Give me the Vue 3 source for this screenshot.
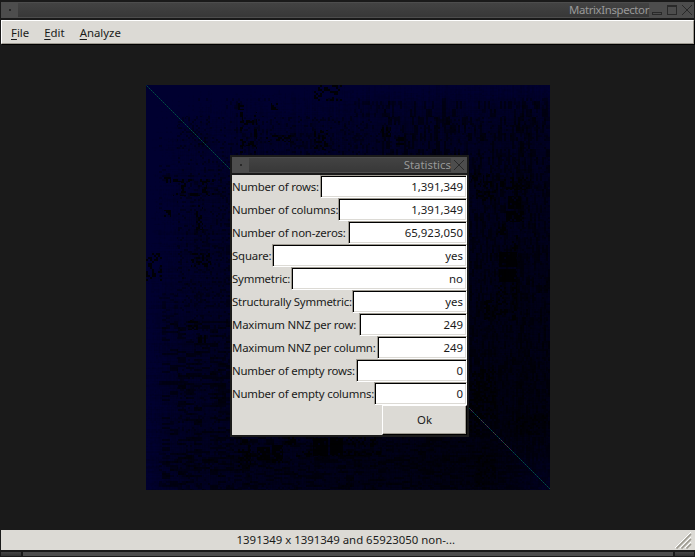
<script setup>
import { onMounted, ref } from 'vue'

const menus = ['File', 'Edit', 'Analyze']

const stats = [
  { label: 'Number of rows:', value: '1,391,349', labelWidth: 88 },
  { label: 'Number of columns:', value: '1,391,349', labelWidth: 106 },
  { label: 'Number of non-zeros:', value: '65,923,050', labelWidth: 116 },
  { label: 'Square:', value: 'yes', labelWidth: 40 },
  { label: 'Symmetric:', value: 'no', labelWidth: 59 },
  { label: 'Structurally Symmetric:', value: 'yes', labelWidth: 120 },
  { label: 'Maximum NNZ per row:', value: '249', labelWidth: 127 },
  { label: 'Maximum NNZ per column:', value: '249', labelWidth: 145 },
  { label: 'Number of empty rows:', value: '0', labelWidth: 124 },
  { label: 'Number of empty columns:', value: '0', labelWidth: 142 }
]

const matrix = ref(null)

// Deterministic hash in [0, 1)
function hash(a, b) {
  let h = Math.imul(a + 101, 0x9e3779b1)
  h = Math.imul(h ^ (h >>> 15), 0x85ebca6b)
  h = (h ^ (h >>> 13)) + Math.imul(b + 57, 0xc2b2ae35)
  h = Math.imul(h ^ (h >>> 16), 0x7feb352d)
  h = Math.imul(h ^ (h >>> 15), 0x846ca68b)
  return ((h ^ (h >>> 16)) >>> 0) / 4294967296
}

// Sparse blocks as [start, end, start, end, density lost]; mirrored over the diagonal
const blocks = [
  [167, 182, 353, 371, 0.95], [184, 197, 353, 371, 0.9],
  [111, 124, 362, 375, 0.85], [126, 137, 360, 378, 0.8],
  [94, 97, 27, 68, 0.5], [108, 111, 27, 68, 0.5], [97, 108, 35, 40, 0.6], [97, 108, 56, 61, 0.6],
  [90, 98, 18, 25, 0.5], [125, 132, 18, 25, 0.6], [168, 197, 0, 16, 0.3],
  [168, 182, 45, 65, 0.45], [120, 145, 50, 57, 0.3],
  [235, 245, 42, 52, 0.5], [250, 262, 52, 60, 0.45],
  [88, 102, 325, 335, 0.4],
  [89, 106, 337, 346, 0.45], [105, 116, 330, 350, 0.4],
  [92, 105, 350, 385, 0.4], [139, 150, 350, 360, 0.5],
  [150, 166, 366, 372, 0.55], [198, 235, 366, 371, 0.5],
  [215, 235, 338, 350, 0.4], [284, 334, 284, 350, 0.4],
  [350, 362, 200, 230, 0.4], [370, 400, 330, 350, 0.3]
]

function intensity(x, y) {
  const a = Math.min(x, y)
  const b = Math.max(x, y)
  const edge = Math.exp(-a / 22)
  let v = 57 - b * 0.035 - a * 0.055 + edge * 12
  // streaks running along both axes
  v -= hash(b >> 1, 7) * 6
  v -= hash(b, a >> 4) * 5
  v -= hash(a, b >> 4) * 5
  v -= hash(a >> 1, b >> 1) * 6
  const patch = hash(a >> 4, b >> 4)
  if (patch > 0.6 && a > 12 && hash(b >> 1, a >> 2) > 0.75) v *= 0.65
  if (b > 38 && a > 30 && hash(b >> 1, a >> 1) > 0.87) v *= 0.6
  if (b > 235 && a > 15 && hash(b >> 1, a >> 3) > 0.74) v *= 0.5
  for (const [x0, x1, y0, y1, loss] of blocks) {
    if ((x >= x0 && x < x1 && y >= y0 && y < y1) || (y >= x0 && y < x1 && x >= y0 && x < y1)) {
      if (hash(a >> 1, b >> 1) < loss) v *= 0.12
    }
  }
  const rim = Math.max(0, a - 320) / 84
  v += rim * rim * 22
  return Math.max(0, Math.min(48, v))
}

onMounted(() => {
  const el = matrix.value
  const ctx = el.getContext('2d')
  const img = ctx.createImageData(el.width, el.height)
  for (let y = 0; y < el.height; y++) {
    for (let x = 0; x < el.width; x++) {
      const i = (y * el.width + x) * 4
      img.data[i + 2] = intensity(x, y)
      img.data[i + 3] = 255
      if (x === y) {
        img.data[i + 1] = x % 2 ? 76 : 34
        img.data[i + 2] = 64
        if (x > 310 && x < 365 && hash(x, 3) > 0.6) img.data[i] = 55
      }
    }
  }
  ctx.putImageData(img, 0, 0)
})
</script>

<template>
  <div class="window">
    <header class="titlebar main-title">
      <span class="sysmenu"><i></i></span>
      <span class="caption">MatrixInspector</span>
      <svg class="controls" width="45" height="16" viewBox="0 0 45 16" fill="none" stroke="#292929" shape-rendering="crispEdges">
        <rect x="3.5" y="10.5" width="9" height="2" />
        <path d="M18.5 3.5h9v9h-9zM18 4.5h10" />
        <path d="M33 3l10 10M43 3L33 13" shape-rendering="auto" />
      </svg>
    </header>

    <nav class="menubar">
      <span v-for="m in menus" :key="m" class="menu"><u>{{ m[0] }}</u>{{ m.slice(1) }}</span>
    </nav>

    <main class="view">
      <canvas ref="matrix" class="matrix" width="404" height="405"></canvas>
    </main>

    <footer class="status">
      <span>1391349 x 1391349 and 65923050 non-...</span>
      <svg class="grip" width="17" height="18" viewBox="0 0 17 18" fill="none">
        <path d="M0 17L16 1M5 17L16 6M10 17L16 11" stroke="#fff" />
        <path d="M1.5 17.5L16 3M6.5 17.5L16 8M11.5 17.5L16 13" stroke="#9c998f" stroke-width="1.6" />
      </svg>
    </footer>
    <div class="handles"><i class="corner"></i><i class="bar"></i><i class="corner"></i></div>

    <section class="dialog">
      <header class="titlebar">
        <span class="sysmenu"><i></i></span>
        <span class="caption">Statistics</span>
        <svg class="controls" width="16" height="16" viewBox="0 0 16 16" fill="none" stroke="#292929">
          <path d="M3 3l10 10M13 3L3 13" />
        </svg>
      </header>
      <div class="body">
        <div v-for="s in stats" :key="s.label" class="row">
          <span class="label" :style="{ width: s.labelWidth + 'px' }">{{ s.label }}</span>
          <span class="entry">{{ s.value }}</span>
        </div>
        <div class="actions"><button class="ok">Ok</button></div>
      </div>
    </section>
  </div>
</template>

<style>
body {
  background: #1a1a1a;
  overflow: hidden;
}
</style>

<style scoped>
.window {
  position: relative;
  box-sizing: border-box;
  width: 695px;
  height: 557px;
  padding: 2px 0 0 1px;
  display: flex;
  flex-direction: column;
  background: #1a1a1a;
  font: 11.4px/16px "Noto Sans", sans-serif;
  color: #1a1a1a;
  overflow: hidden;
}
.titlebar {
  display: flex;
  height: 16px;
  flex: none;
  background: #4d4d4d;
  color: #999;
}
.main-title {
  margin-right: 1px;
  letter-spacing: -0.36px;
}
.sysmenu {
  width: 17px;
  display: flex;
  align-items: center;
  justify-content: center;
}
.sysmenu i {
  width: 2px;
  height: 2px;
  background: #292929;
}
.caption {
  flex: 1;
  margin: 1px 0;
  line-height: 14px;
  text-align: right;
  background: linear-gradient(#434343, #383838);
}
.controls {
  flex: none;
}
.menubar {
  display: flex;
  flex: none;
  box-sizing: border-box;
  height: 24px;
  margin: 2px 1px 0 0;
  padding: 4px 0 0 9px;
  gap: 15px;
  background: #dcdad5;
  border: 1px solid #fff;
  border-right-color: #9e9a91;
  border-bottom-color: #9e9a91;
  box-shadow: 1px 1px #000;
}
.menu u {
  text-underline-offset: 2px;
}
.view {
  flex: 1;
  padding: 41px 0 0 145px;
}
.matrix {
  display: block;
}
.status {
  display: flex;
  flex: none;
  align-items: center;
  justify-content: flex-end;
  height: 20px;
  gap: 220px;
  padding-right: 3px;
  line-height: 22px;
  background: #dcdad5;
}
.status span {
  white-space: nowrap;
}
.handles {
  display: flex;
  flex: none;
  gap: 2px;
  height: 4px;
  margin: 2px 1px 1px 0;
}
.bar {
  flex: 1;
  background: #4d4d4d;
}
.corner {
  width: 20px;
  background: linear-gradient(#454545, #333);
}
.corner:last-child {
  width: 19px;
}
.dialog {
  position: absolute;
  left: 230px;
  top: 155px;
  width: 239px;
  height: 282px;
  box-sizing: border-box;
  border: 2px solid #1a1a1a;
  background: #1a1a1a;
}
.body {
  height: 260px;
  margin-top: 2px;
  background: #dcdad5;
}
.row {
  display: flex;
  height: 23px;
}
.label {
  flex: none;
  line-height: 24px;
  letter-spacing: -0.19px;
  white-space: nowrap;
}
.entry {
  flex: 1;
  box-sizing: border-box;
  height: 23px;
  padding-right: 3px;
  line-height: 22px;
  text-align: right;
  background: #fff;
  border: 1px solid;
  border-color: #9e9a91 #fff #fff #9e9a91;
  box-shadow: inset 1px 1px #000, inset -1px -1px #dcdad5;
}
.actions {
  display: flex;
  justify-content: flex-end;
}
.ok {
  width: 85px;
  height: 30px;
  padding: 0;
  font: inherit;
  color: inherit;
  background: #dcdad5;
  border: 1px solid;
  border-color: #fff #000 #000 #fff;
  box-shadow: inset -1px -1px #9e9a91;
}
</style>
